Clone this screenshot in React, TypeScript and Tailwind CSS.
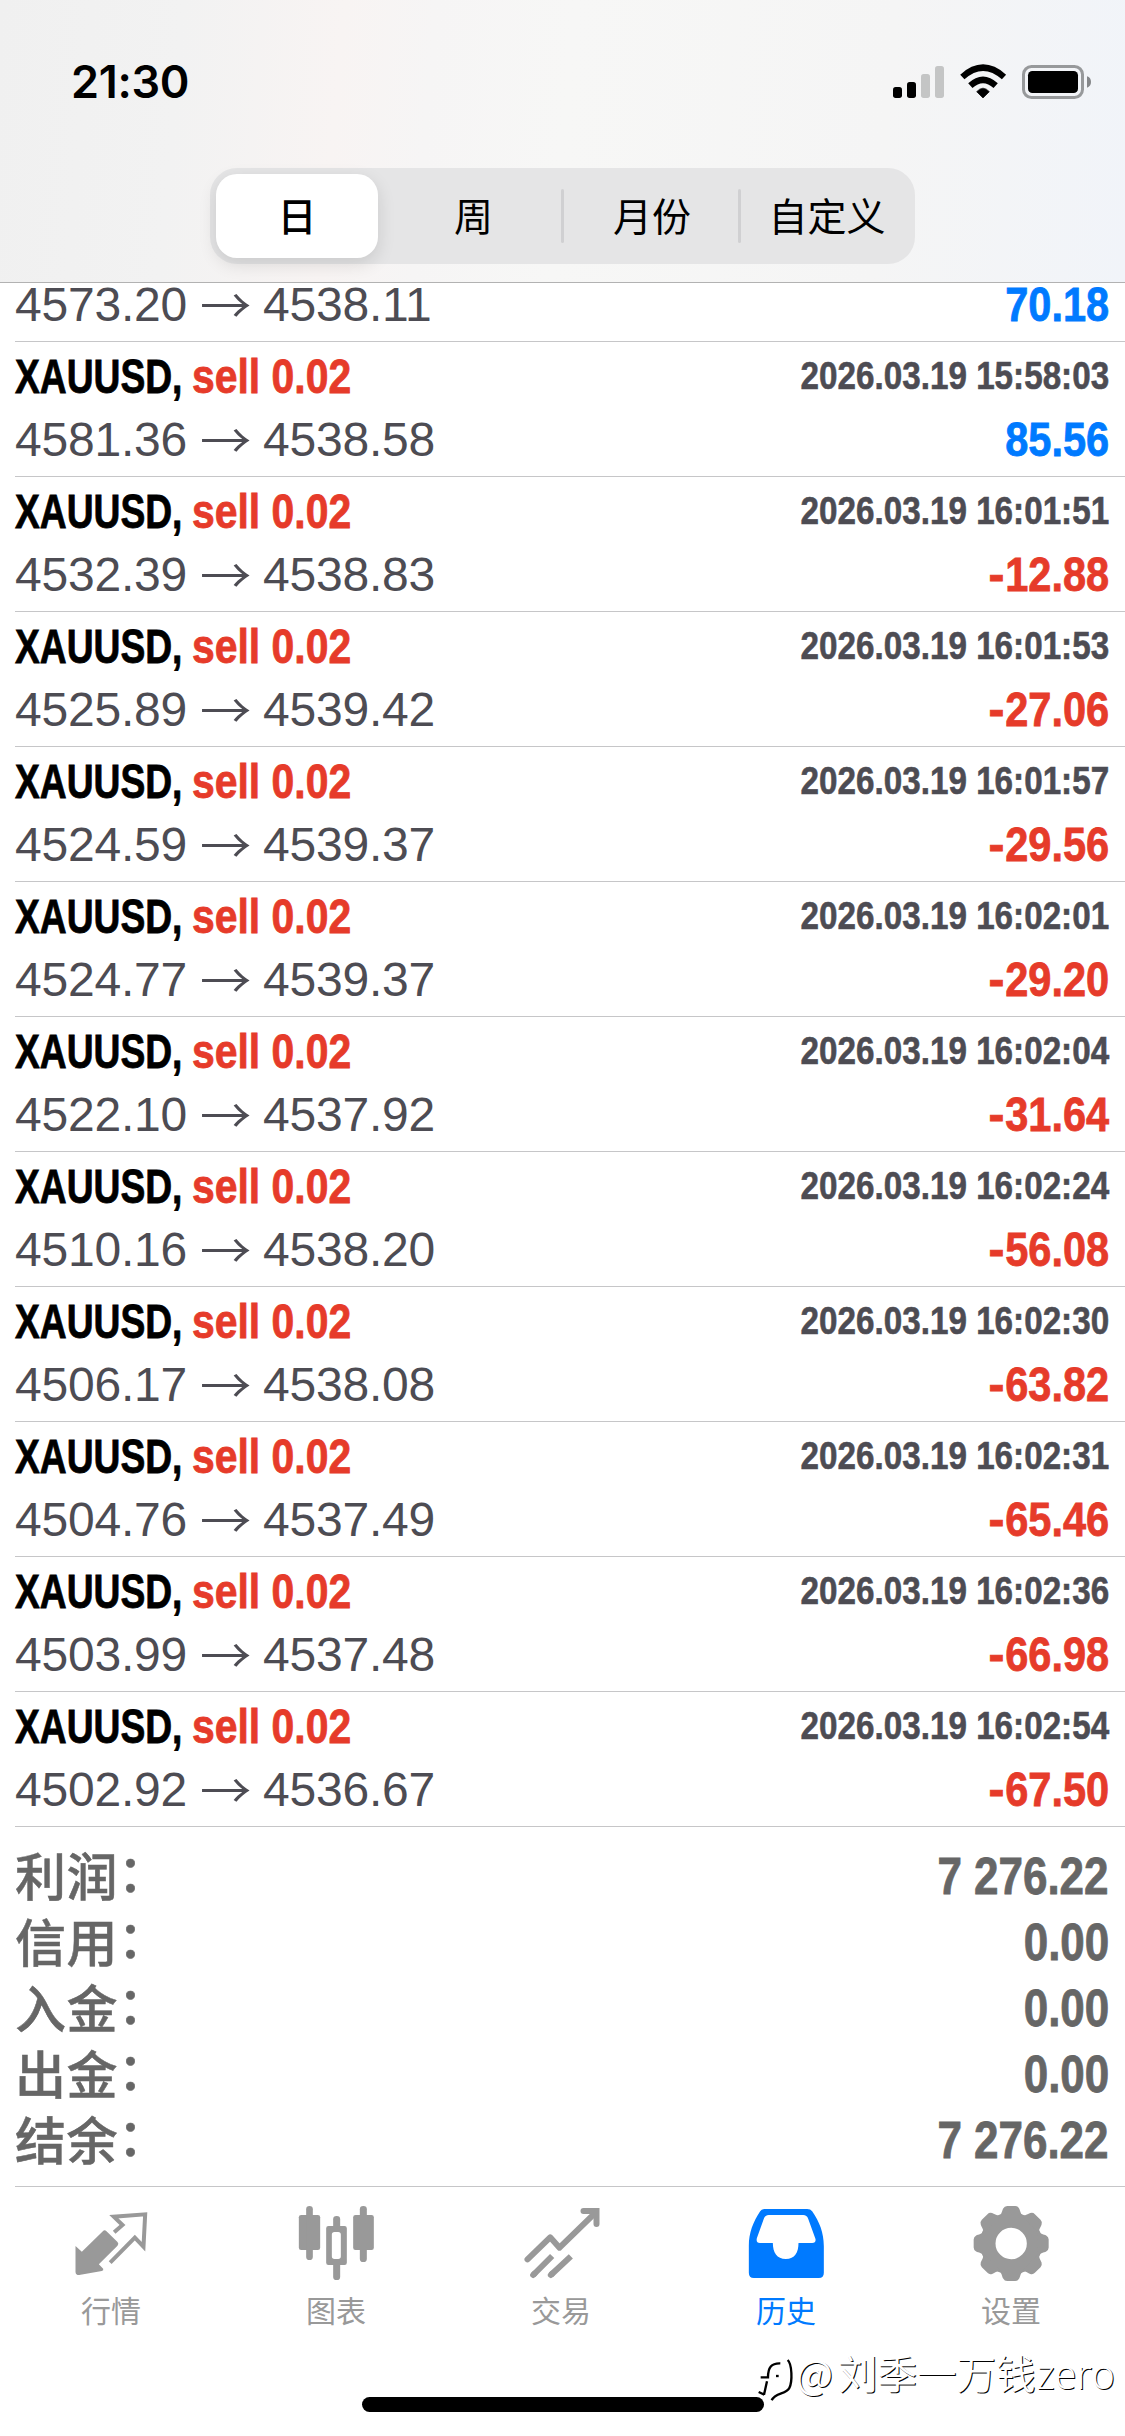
import type { ReactNode } from "react";

type Deal = { date: string; open: string; close: string; profit: string };

const deals: Deal[] = [
  { date: "2026.03.19 15:58:03", open: "4581.36", close: "4538.58", profit: "85.56" },
  { date: "2026.03.19 16:01:51", open: "4532.39", close: "4538.83", profit: "-12.88" },
  { date: "2026.03.19 16:01:53", open: "4525.89", close: "4539.42", profit: "-27.06" },
  { date: "2026.03.19 16:01:57", open: "4524.59", close: "4539.37", profit: "-29.56" },
  { date: "2026.03.19 16:02:01", open: "4524.77", close: "4539.37", profit: "-29.20" },
  { date: "2026.03.19 16:02:04", open: "4522.10", close: "4537.92", profit: "-31.64" },
  { date: "2026.03.19 16:02:24", open: "4510.16", close: "4538.20", profit: "-56.08" },
  { date: "2026.03.19 16:02:30", open: "4506.17", close: "4538.08", profit: "-63.82" },
  { date: "2026.03.19 16:02:31", open: "4504.76", close: "4537.49", profit: "-65.46" },
  { date: "2026.03.19 16:02:36", open: "4503.99", close: "4537.48", profit: "-66.98" },
  { date: "2026.03.19 16:02:54", open: "4502.92", close: "4536.67", profit: "-67.50" },
];

const summary = [
  ["利润", "7 276.22"],
  ["信用", "0.00"],
  ["入金", "0.00"],
  ["出金", "0.00"],
  ["结余", "7 276.22"],
];

function StatusIcons() {
  return (
    <svg className="h-[60px] w-[240px]" viewBox="0 0 720 180" fill="#000">
      <rect x="39" y="111" width="27" height="33" rx="8" />
      <rect x="81" y="96" width="27" height="48" rx="8" />
      <rect x="123" y="72" width="27" height="72" rx="8" fill="#c4c5c5" />
      <rect x="165" y="48" width="27" height="96" rx="8" fill="#c4c5c5" />
      <path d="M247 81Q309 25 372 81" fill="none" stroke="#000" strokeWidth="19" />
      <path d="M271 107Q309 72 347 107" fill="none" stroke="#000" strokeWidth="19" />
      <path d="M290 125Q309 104 328 125L309 144Z" stroke="#000" strokeWidth="2" />
      <rect x="430.500" y="49.500" width="177" height="93" rx="24" fill="none" stroke="#97999b" strokeWidth="9" />
      <rect x="444" y="63" width="150" height="66" rx="13" />
      <path d="M621 79Q633 83 633 96Q633 109 621 113Z" fill="#85878a" />
    </svg>
  );
}

function Prices({ open, close, profit }: { open: string; close: string; profit: string }) {
  const negative = profit.startsWith("-");
  return (
    <div className="flex h-[60px] justify-between text-[48px] leading-[60px]">
      <div className="flex tracking-[-0.2px] text-[#4d4c53]">
        <span className="w-[185px]">{open}</span>
        <span className="w-[63px] origin-left -translate-y-[3px] scale-x-[1.07] font-['Noto_Sans_CJK_SC'] font-[350]">
          →
        </span>
        <span>{close}</span>
      </div>
      <span
        className={`origin-right scale-x-[0.865] font-bold [font-kerning:none] [-webkit-text-stroke:0.8px_currentColor] ${
          negative ? "text-[#e63b2a]" : "text-[#007aff]"
        }`}
      >
        {negative && <span className="mr-px inline-block origin-right scale-x-[1.15]">-</span>}
        {profit.replace("-", "")}
      </span>
    </div>
  );
}

function DealRow({ deal }: { deal: Deal }) {
  return (
    <div className="h-[135px] border-b border-[#c6c6c8] pt-[5px] pr-4">
      <div className="flex h-[63px] justify-between leading-[60px] font-bold">
        <div className="flex text-[48px] whitespace-nowrap">
          <span className="w-[177px]">
            <span className="inline-block origin-left scale-x-[0.775] [-webkit-text-stroke:0.8px_currentColor]">
              XAUUSD,
            </span>
          </span>
          <span className="inline-block origin-left scale-x-[0.852] text-[#e63b2a] [-webkit-text-stroke:0.8px_currentColor]">
            sell 0.02
          </span>
        </div>
        <span className="-mt-px origin-right scale-x-[0.852] text-[39px] text-[#4d4c53] [font-kerning:none] [-webkit-text-stroke:0.6px_currentColor]">
          {deal.date}
        </span>
      </div>
      <Prices open={deal.open} close={deal.close} profit={deal.profit} />
    </div>
  );
}

function Tab({ label, active, children }: { label: string; active?: boolean; children: ReactNode }) {
  return (
    <div className={`flex flex-1 flex-col items-center ${active ? "text-[#007aff]" : "text-[#999999]"}`}>
      <svg className="h-[90px] w-[100px]" viewBox="7.5 0 300 270" fill="currentColor">
        {children}
      </svg>
      <span className="-mt-[3px] pr-[3px] font-['Noto_Sans_CJK_SC'] text-[30px] leading-[44px]">{label}</span>
    </div>
  );
}

function Divider() {
  return <span className="h-[54px] w-[3px] rounded-full bg-[#d0d0d2]" />;
}

const teeth = [0, 45, 90, 135, 180, 225, 270, 315];

export default function App() {
  return (
    <div className="relative flex h-[2436px] w-[1125px] flex-col overflow-hidden bg-white font-['Liberation_Sans','Noto_Sans_CJK_SC',sans-serif]">
      <header className="flex h-[283px] flex-col border-b border-[#b2b2b2] bg-[linear-gradient(95deg,#f0f0f0_0%,#f2f2f2_16%,#f8f4f3_30%,#f6f5f5_38%,#f7f7f6_50%,#f5f5f5_78%,#f1f4f9_100%)]">
        <div className="flex h-[168px] items-start justify-between pt-[50px] pr-[5px] pl-[71px]">
          <span className="font-['Inter'] text-[45px] leading-[64px] font-semibold tracking-[-0.3px]">21:30</span>
          <StatusIcons />
        </div>
        <div className="ml-[210px] flex h-24 w-[705px] items-center rounded-[27px] bg-[#e5e5e6] p-1.5 font-['Noto_Sans_CJK_SC'] text-[39px] leading-[60px]">
          <span className="flex h-[84px] w-[162px] items-center justify-center rounded-[21px] bg-white pb-1 font-medium shadow-[0_6px_18px_rgba(0,0,0,0.12)]">
            日
          </span>
          <span className="flex w-[183px] justify-center pb-1 pl-2">周</span>
          <Divider />
          <span className="flex w-[174px] justify-center pb-1 pl-0.5">月份</span>
          <Divider />
          <span className="flex flex-1 justify-center pb-1 pl-1">自定义</span>
        </div>
      </header>

      <main className="pl-[15px]">
        <div className="flex h-[59px] flex-col justify-end border-b border-[#c6c6c8] pr-4 pb-[6px]">
          <Prices open="4573.20" close="4538.11" profit="70.18" />
        </div>
        {deals.map((deal) => (
          <DealRow key={deal.date} deal={deal} />
        ))}
        <div className="h-[360px] border-b border-[#c6c6c8] pt-[17px] pr-4 text-[51px] leading-[66px] text-[#666666]">
          {summary.map(([label, value]) => (
            <div key={label} className="flex h-[66px] justify-between">
              <span className="-mt-[3px] flex font-['Noto_Sans_CJK_SC'] font-medium tracking-[0.4px] [-webkit-text-stroke:0.5px_currentColor]">
                {label}
                <span className="-translate-y-1">：</span>
              </span>
              <span className="origin-right scale-x-[0.862] font-bold [font-kerning:none] [-webkit-text-stroke:0.8px_currentColor]">
                {value}
              </span>
            </div>
          ))}
        </div>
      </main>

      <nav className="flex h-[210px] pt-[13px]">
        <Tab label="行情">
          <path d="M45 138L64 155L127 94Q132 88 138 94L171 126Q176 131 171 137L115 193L128 206Q130 211 124 213L56 225Q45 225 45 215Z" />
          <path
            d="M161 97L186 75L160 50L254 43L249 140L223 113L149 188"
            fill="none"
            stroke="currentColor"
            strokeWidth="12"
          />
        </Tab>
        <Tab label="图表">
          <g transform="translate(6 0)">
            <rect x="34" y="45" width="64" height="105" rx="7" />
            <rect x="56" y="18" width="20" height="162" rx="10" />
            <rect x="197" y="45" width="62" height="105" rx="7" />
            <rect x="217" y="18" width="21" height="168" rx="10" />
            <rect x="137" y="48" width="21" height="45" rx="10" />
            <rect x="137" y="184" width="21" height="56" rx="10" />
            <path
              fillRule="evenodd"
              d="M123 78H171Q178 78 178 85V188Q178 195 171 195H123Q116 195 116 188V85Q116 78 123 78ZM141 96Q133 96 133 104V169Q133 177 141 177H152Q160 177 160 169V104Q160 96 152 96Z"
            />
          </g>
        </Tab>
        <Tab label="交易">
          <g fill="none" stroke="currentColor" strokeWidth="18" strokeLinecap="round" strokeLinejoin="round">
            <path d="M51 178L119 112L147 143L255 38" />
            <path d="M219 33H258V72" strokeLinejoin="miter" />
            <path d="M68 225L72 221M121 225L125 221" />
            <path d="M68 225L125 168M121 225L181 169" strokeLinecap="butt" />
          </g>
        </Tab>
        <Tab label="历史" active>
          <path
            transform="translate(5 0)"
            fillRule="evenodd"
            d="M82 27H210Q220 27 225 34C247 66 260 98 260 138V218Q260 234 245 234H50Q35 234 35 218V138C35 98 48 66 69 34Q73 27 82 27ZM95 45Q84 45 80 56L59 115Q56 129 68 129H107C107 157 119 177 146 177C173 177 184 157 184 129H225Q237 129 235 117L213 56Q209 45 198 45Z"
          />
        </Tab>
        <Tab label="设置">
          <g transform="translate(152 130.500)">
            <circle r="70" fill="none" stroke="currentColor" strokeWidth="46" />
            {teeth.map((angle) => (
              <path
                key={angle}
                transform={`rotate(${angle})`}
                d="M-39 -80C-27 -88 -28 -98 -24 -105Q-20 -112.500 -12 -112.500H12Q20 -112.500 24 -105C28 -98 27 -88 39 -80Z"
              />
            ))}
          </g>
        </Tab>
      </nav>

      <div className="ml-[362px] h-[15px] w-[402px] rounded-full bg-black" />

      <div className="absolute right-2.5 bottom-[34px] flex items-center">
        <svg className="h-[45px] w-[40px]" viewBox="45 45 120 135" fill="none" stroke="#000" strokeWidth="7">
          <path d="M72 158L81 118M56 150L73 158" />
          <path d="M62 106H84C84 76 94 63 121 64" />
          <path d="M108 102H116" />
          <path d="M143 54C156 66 158 118 148 138C138 158 106 150 95 175" />
        </svg>
        <span className="-mt-3 ml-px font-['Noto_Sans_CJK_SC'] text-[39.5px] leading-[56px] font-[350] text-white [text-shadow:1px_1px_0_#000]">
          <span className="mr-[5px]">@</span>刘季一万钱
          <span className="ml-px font-['Open_Sans'] font-light">zero</span>
        </span>
      </div>
    </div>
  );
}
